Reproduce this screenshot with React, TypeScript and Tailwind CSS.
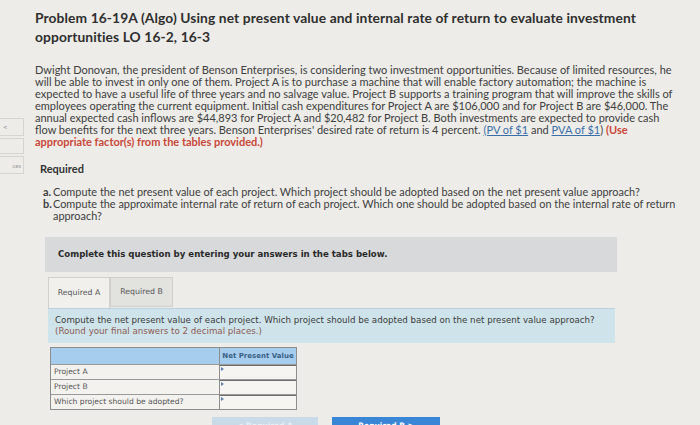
import React from 'react';

const rows = ['Project A', 'Project B', 'Which project should be adopted?'];

export default function App() {
  return (
    <div className="w-[700px] h-[425px] overflow-hidden bg-[#edece8] text-[#3a3a3a] flex" style={{ fontFamily: 'Lato, "Open Sans", sans-serif' }}>
      {/* Side strip */}
      <div className="w-[24px] shrink-0 pt-[118px] flex flex-col gap-[2px]">
        <div className="h-[18px] border border-l-0 border-[#d6d5d0] text-[8px] text-[#8a8a8a] flex items-center pl-[3px]">&lt;</div>
        <div className="h-[16px] border border-l-0 border-[#d6d5d0]" />
        <div className="h-[18px] border border-l-0 border-[#d6d5d0] text-[6px] text-[#9a9a9a] flex items-center justify-end pr-[2px]">ces</div>
      </div>

      <div className="flex-1 pl-[11px] pr-[10px] pt-[8px]">
        <h1 className="text-[13.8px] leading-[19px] font-bold text-[#2f2f2f] tracking-[0.1px]">
          <div className="whitespace-nowrap">Problem 16-19A (Algo) Using net present value and internal rate of return to evaluate investment</div>
          <div>opportunities LO 16-2, 16-3</div>
        </h1>

        <div className="mt-[18px] text-[11px] leading-[12px] text-[#404040] whitespace-nowrap">
          <div>Dwight Donovan, the president of Benson Enterprises, is considering two investment opportunities. Because of limited resources, he</div>
          <div>will be able to invest in only one of them. Project A is to purchase a machine that will enable factory automation; the machine is</div>
          <div>expected to have a useful life of three years and no salvage value. Project B supports a training program that will improve the skills of</div>
          <div>employees operating the current equipment. Initial cash expenditures for Project A are $106,000 and for Project B are $46,000. The</div>
          <div>annual expected cash inflows are $44,893 for Project A and $20,482 for Project B. Both investments are expected to provide cash</div>
          <div>
            flow benefits for the next three years. Benson Enterprises' desired rate of return is 4 percent.{' '}
            <span className="text-[#3b6fa8] underline">(PV of $1</span> and <span className="text-[#3b6fa8] underline">PVA of $1</span>){' '}
            <span className="text-[#c9483a] font-bold">(Use</span>
          </div>
          <div className="text-[#c9483a] font-bold">appropriate factor(s) from the tables provided.)</div>
        </div>

        <div className="mt-[15px] pl-[5px] text-[11px] leading-[12px] font-bold text-[#333]">Required</div>

        <div className="mt-[11px] pl-[8px] text-[10.9px] leading-[12px] text-[#404040] whitespace-nowrap">
          <div className="flex">
            <span className="font-bold w-[10px] shrink-0">a.</span>
            <span>Compute the net present value of each project. Which project should be adopted based on the net present value approach?</span>
          </div>
          <div className="flex">
            <span className="font-bold w-[10px] shrink-0">b.</span>
            <span>Compute the approximate internal rate of return of each project. Which one should be adopted based on the internal rate of return</span>
          </div>
          <div className="pl-[10px]">approach?</div>
        </div>

        <div style={{ fontFamily: '"DejaVu Sans", Verdana, sans-serif' }}>
          <div className="mt-[15px] ml-[10px] w-[572px] h-[35px] bg-[#d7d9da] flex items-center pl-[13px] text-[8.6px] font-bold text-[#2a2a2a]">
            Complete this question by entering your answers in the tabs below.
          </div>

          <div className="mt-[5px] ml-[13px] flex text-[7.8px] text-[#555]">
            <div className="w-[62px] h-[31px] bg-[#f1f0ec] border border-b-0 border-[#d0d0cc] flex items-center justify-center">Required A</div>
            <div className="w-[63px] h-[30px] bg-[#e2e2df] border border-[#cfcfcb] flex items-center justify-center">Required B</div>
          </div>

          <div className="ml-[13px] w-[567px] h-[35px] bg-[#cfe4ea] border-t border-[#b9d3da] pl-[7px] pt-[6px] text-[8.7px] leading-[11px] whitespace-nowrap">
            <div className="text-[#3a3a3a]">Compute the net present value of each project. Which project should be adopted based on the net present value approach?</div>
            <div className="text-[#8a5a55]">(Round your final answers to 2 decimal places.)</div>
          </div>

          <div className="mt-[4px] ml-[15px] w-[247px] border border-[#8d8d8d] text-[7.6px]">
            <div className="flex h-[16px] bg-[#a6cdee]">
              <div className="w-[168px]" />
              <div className="flex-1 border-l border-[#8d8d8d] flex items-center justify-center font-bold text-[#3a5f86] text-[7px]">Net Present Value</div>
            </div>
            {rows.map((r) => (
              <div key={r} className="flex h-[15px] border-t border-[#9a9a9a] bg-[#f3f2ee]">
                <div className="w-[168px] pl-[3px] flex items-center text-[#555]">{r}</div>
                <div className="flex-1 border-l border-[#8d8d8d] border-t border-t-[#6d6d6d] relative bg-[#f6f5f1]">
                  <span className="absolute left-[1px] top-[1px] w-0 h-0 border-y-[2px] border-y-transparent border-l-[3px] border-l-[#5a7fb0]" />
                </div>
              </div>
            ))}
          </div>

          <div className="mt-[7px] ml-[177px] flex gap-[14px] text-[7.5px] font-bold">
            <div className="w-[106px] h-[20px] bg-[#c9dbe9] text-[#e8f0f6] flex items-start justify-center pt-[3px]">&lt; Required A</div>
            <div className="w-[108px] h-[20px] bg-[#3a86d6] text-white flex items-start justify-center pt-[3px]">Required B &gt;</div>
          </div>
        </div>
      </div>
    </div>
  );
}
